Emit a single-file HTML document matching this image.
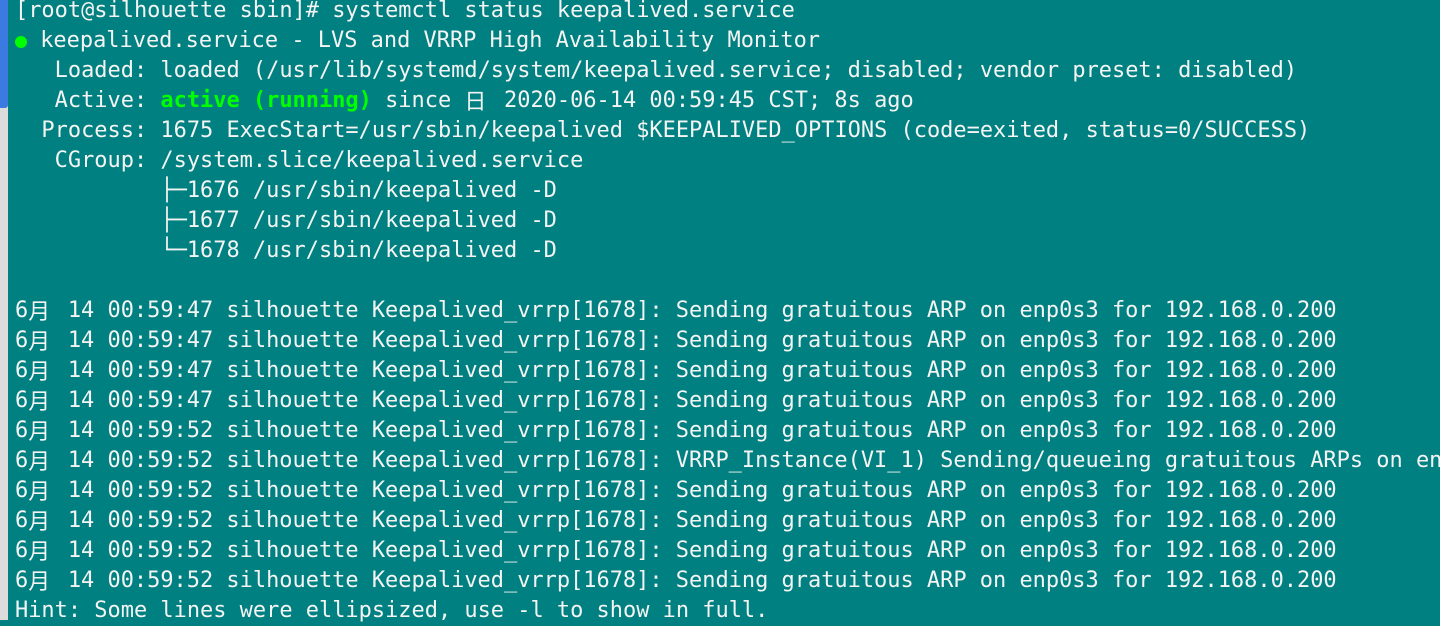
<!DOCTYPE html>
<html><head><style>
html,body{margin:0;padding:0;width:1440px;height:620px;overflow:hidden;background:#008080;}
.strip{position:absolute;left:0;top:0;width:8px;height:620px;background:#dcdcdc;}
.strip2{position:absolute;left:0;top:0;width:8px;height:108px;background:#3b7ae0;border-radius:0 0 3px 0;}
.t{position:absolute;left:15px;top:-4px;margin:0;font-family:"DejaVu Sans Mono",monospace;font-size:21.96px;color:#f4f4f4;}
.t div{height:30px;line-height:30px;overflow:visible;white-space:pre;}
.g{color:#00ff00;font-weight:bold;}
.dot{display:inline-block;width:12px;height:12px;border-radius:50%;background:#00ff00;vertical-align:-1px;}
.cjk{display:inline-block;width:26.4px;font-family:"Noto Sans CJK SC",sans-serif;line-height:20px;height:20px;vertical-align:-2px;}
</style></head><body>
<div class="strip"></div><div class="strip2"></div>
<div class="t">
<div>[root@silhouette sbin]# systemctl status keepalived.service</div>
<div><span class="dot"></span> keepalived.service - LVS and VRRP High Availability Monitor</div>
<div>   Loaded: loaded (/usr/lib/systemd/system/keepalived.service; disabled; vendor preset: disabled)</div>
<div>   Active: <span class="g">active (running)</span> since <span class="cjk">日</span> 2020-06-14 00:59:45 CST; 8s ago</div>
<div>  Process: 1675 ExecStart=/usr/sbin/keepalived $KEEPALIVED_OPTIONS (code=exited, status=0/SUCCESS)</div>
<div>   CGroup: /system.slice/keepalived.service</div>
<div>           ├─1676 /usr/sbin/keepalived -D</div>
<div>           ├─1677 /usr/sbin/keepalived -D</div>
<div>           └─1678 /usr/sbin/keepalived -D</div>
<div> </div>
<div>6<span class="cjk">月</span> 14 00:59:47 silhouette Keepalived_vrrp[1678]: Sending gratuitous ARP on enp0s3 for 192.168.0.200</div>
<div>6<span class="cjk">月</span> 14 00:59:47 silhouette Keepalived_vrrp[1678]: Sending gratuitous ARP on enp0s3 for 192.168.0.200</div>
<div>6<span class="cjk">月</span> 14 00:59:47 silhouette Keepalived_vrrp[1678]: Sending gratuitous ARP on enp0s3 for 192.168.0.200</div>
<div>6<span class="cjk">月</span> 14 00:59:47 silhouette Keepalived_vrrp[1678]: Sending gratuitous ARP on enp0s3 for 192.168.0.200</div>
<div>6<span class="cjk">月</span> 14 00:59:52 silhouette Keepalived_vrrp[1678]: Sending gratuitous ARP on enp0s3 for 192.168.0.200</div>
<div>6<span class="cjk">月</span> 14 00:59:52 silhouette Keepalived_vrrp[1678]: VRRP_Instance(VI_1) Sending/queueing gratuitous ARPs on enp0s3</div>
<div>6<span class="cjk">月</span> 14 00:59:52 silhouette Keepalived_vrrp[1678]: Sending gratuitous ARP on enp0s3 for 192.168.0.200</div>
<div>6<span class="cjk">月</span> 14 00:59:52 silhouette Keepalived_vrrp[1678]: Sending gratuitous ARP on enp0s3 for 192.168.0.200</div>
<div>6<span class="cjk">月</span> 14 00:59:52 silhouette Keepalived_vrrp[1678]: Sending gratuitous ARP on enp0s3 for 192.168.0.200</div>
<div>6<span class="cjk">月</span> 14 00:59:52 silhouette Keepalived_vrrp[1678]: Sending gratuitous ARP on enp0s3 for 192.168.0.200</div>
<div>Hint: Some lines were ellipsized, use -l to show in full.</div>
</div>
</body></html>
